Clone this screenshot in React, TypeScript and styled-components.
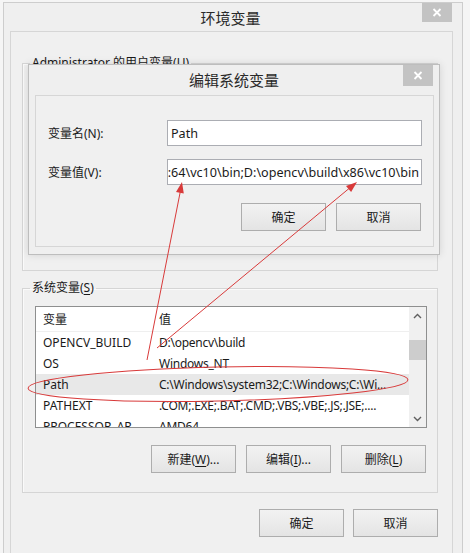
import React from 'react';
import styled, { createGlobalStyle } from 'styled-components';

const UI_FONT = `"Noto Sans", "Noto Sans CJK SC", sans-serif`;

const GlobalStyle = createGlobalStyle`
  html, body { margin: 0; padding: 0; }
  body {
    background: #f4f4f4;
    font-family: ${UI_FONT};
    font-size: 12px;
    color: #1a1a1a;
  }
`;

const Desktop = styled.div`
  position: relative;
  width: 470px;
  height: 553px;
  overflow: hidden;
  box-sizing: border-box;
  padding: 2px 0 0 3px;
  background: #f5f5f5;
`;

const Window = styled.div`
  width: 460px;
  height: 570px;
  box-sizing: border-box;
  border: 1px solid #cdcdcd;
  background: #efefef;
  display: flex;
  flex-direction: column;
`;

const TitleBar = styled.div<{ $height: number; $padLeft: number; $padRight: number }>`
  display: flex;
  flex-shrink: 0;
  height: ${p => p.$height}px;
  padding: 0 ${p => p.$padRight}px 0 ${p => p.$padLeft}px;
`;

const TitleSide = styled.div`
  flex: 1;
  display: flex;
  justify-content: flex-end;
  align-items: flex-start;
`;

const TitleText = styled.div`
  align-self: center;
  font-size: 15px;
  color: #2a2a2a;
  white-space: nowrap;
`;

const CloseButton = styled.div<{ $w: number; $h: number }>`
  width: ${p => p.$w}px;
  height: ${p => p.$h}px;
  background: #c3c3c3;
  display: flex;
  align-items: center;
  justify-content: center;
`;

const ClientArea = styled.div`
  flex: 1;
  margin: 0 9px 0 6px;
  border: 1px solid #d6d6d6;
  background: #f0f0f0;
  padding: 23px 14px 0 11px;
  display: flex;
  flex-direction: column;
`;

const GroupBox = styled.fieldset<{ $height: number; $top: number }>`
  margin: ${p => p.$top}px 0 0 0;
  min-width: 0;
  height: ${p => p.$height}px;
  box-sizing: border-box;
  border: 1px solid #d5d5d5;
  box-shadow: inset 1px 1px 0 #fafafa;
  padding: 10px 11px 0 12px;
  display: flex;
  flex-direction: column;
`;

const GroupLegend = styled.legend`
  margin-left: -5px;
  padding: 0 2px;
  line-height: 16px;
  font-size: 12px;
`;

const AccessKey = styled.u`
  text-underline-offset: 2px;
`;

const ButtonRow = styled.div<{ $top: number; $gap: number; $right?: number }>`
  display: flex;
  justify-content: flex-end;
  gap: ${p => p.$gap}px;
  margin-top: ${p => p.$top}px;
  margin-right: ${p => p.$right ?? 0}px;
`;

const PushButton = styled.div`
  width: 85px;
  height: 28px;
  box-sizing: border-box;
  border: 1px solid #adadad;
  background: linear-gradient(#f2f2f2, #e4e4e4);
  display: flex;
  align-items: center;
  justify-content: center;
  font-size: 12px;
  white-space: nowrap;
`;

const ListView = styled.div`
  width: 392px;
  height: 122px;
  box-sizing: border-box;
  border: 1px solid #8e8f8f;
  background: #fff;
  display: flex;
  overflow: hidden;
`;

const ListBody = styled.div`
  flex: 1;
  overflow: hidden;
`;

const ListRow = styled.div<{ $header?: boolean; $selected?: boolean }>`
  display: grid;
  grid-template-columns: 117px 1fr;
  align-items: center;
  height: ${p => (p.$header ? 24 : 21)}px;
  border-bottom: ${p => (p.$header ? '1px solid #efefef' : 'none')};
  background: ${p => (p.$selected ? '#e8e8e8' : 'transparent')};
  white-space: nowrap;
  font-size: 12px;
`;

const NameCell = styled.span`
  padding-left: 7px;
  overflow: hidden;
`;

const ValueCell = styled.span`
  padding-left: 6px;
  overflow: hidden;
  letter-spacing: -0.25px;
`;

const ScrollBar = styled.div`
  width: 17px;
  background: #f0f0f0;
  display: flex;
  flex-direction: column;
`;

const ScrollArrow = styled.div<{ $bottom?: boolean }>`
  height: 17px;
  display: flex;
  align-items: center;
  justify-content: center;
  margin-top: ${p => (p.$bottom ? 'auto' : '0')};
`;

const ScrollThumb = styled.div`
  height: 20px;
  margin-top: 16px;
  background: #cdcdcd;
`;

const Dialog = styled.div`
  position: absolute;
  left: 28px;
  top: 64px;
  width: 412px;
  height: 191px;
  box-sizing: border-box;
  border: 1px solid #bdbdbd;
  background: #efefef;
  box-shadow: 0 0 8px rgba(0, 0, 0, 0.12);
  display: flex;
  flex-direction: column;
`;

const DialogPanel = styled.div`
  margin: 1px 5px 0 6px;
  height: 152px;
  box-sizing: border-box;
  border: 1px solid #d6d6d6;
  background: #f0f0f0;
  padding: 24px 11px 0 12px;
  display: flex;
  flex-direction: column;
`;

const FormGrid = styled.div`
  display: grid;
  grid-template-columns: 119px 1fr;
  row-gap: 13px;
  align-items: center;
`;

const FieldLabel = styled.span`
  font-size: 12px;
  white-space: nowrap;
`;

const TextBox = styled.div<{ $h: number; $alignEnd?: boolean }>`
  height: ${p => p.$h}px;
  box-sizing: border-box;
  border: 1px solid #abadb3;
  background: #fff;
  display: flex;
  align-items: center;
  justify-content: ${p => (p.$alignEnd ? 'flex-end' : 'flex-start')};
  overflow: hidden;
  padding: 0 2px 0 3px;
  font-size: 12.6px;
  white-space: nowrap;
`;

const Annotations = styled.svg`
  position: absolute;
  left: 0;
  top: 0;
  pointer-events: none;
`;

const CrossIcon = () => (
  <svg width="10" height="9" viewBox="0 0 10 9">
    <path d="M1.5 1 L8.5 8 M8.5 1 L1.5 8" stroke="#fff" strokeWidth="1.8" />
  </svg>
);

const Chevron = ({ down }: { down?: boolean }) => (
  <svg width="9" height="6" viewBox="0 0 9 6">
    <polyline
      points={down ? '1,1 4.5,4.5 8,1' : '1,5 4.5,1.5 8,5'}
      fill="none"
      stroke="#5f5f5f"
      strokeWidth="1.4"
    />
  </svg>
);

const systemVars = [
  { name: 'OPENCV_BUILD', value: 'D:\\opencv\\build' },
  { name: 'OS', value: 'Windows_NT' },
  { name: 'Path', value: 'C:\\Windows\\system32;C:\\Windows;C:\\Wi...', selected: true },
  { name: 'PATHEXT', value: '.COM;.EXE;.BAT;.CMD;.VBS;.VBE;.JS;.JSE;....' },
  { name: 'PROCESSOR_AR...', value: 'AMD64' },
];

export default function App() {
  return (
    <>
      <GlobalStyle />
      <Desktop>
        <Window>
          <TitleBar $height={28} $padLeft={5} $padRight={10}>
            <TitleSide />
            <TitleText>环境变量</TitleText>
            <TitleSide>
              <CloseButton $w={30} $h={19}>
                <CrossIcon />
              </CloseButton>
            </TitleSide>
          </TitleBar>
          <ClientArea>
            <GroupBox $height={216} $top={0}>
              <GroupLegend>
                Administrator 的用户变量(<AccessKey>U</AccessKey>)
              </GroupLegend>
            </GroupBox>
            <GroupBox $height={213} $top={9}>
              <GroupLegend>
                系统变量(<AccessKey>S</AccessKey>)
              </GroupLegend>
              <ListView>
                <ListBody>
                  <ListRow $header>
                    <NameCell>变量</NameCell>
                    <ValueCell>值</ValueCell>
                  </ListRow>
                  {systemVars.map(v => (
                    <ListRow key={v.name} $selected={v.selected}>
                      <NameCell>{v.name}</NameCell>
                      <ValueCell>{v.value}</ValueCell>
                    </ListRow>
                  ))}
                </ListBody>
                <ScrollBar>
                  <ScrollArrow>
                    <Chevron />
                  </ScrollArrow>
                  <ScrollThumb />
                  <ScrollArrow $bottom>
                    <Chevron down />
                  </ScrollArrow>
                </ScrollBar>
              </ListView>
              <ButtonRow $top={17} $gap={10}>
                <PushButton>新建(<AccessKey>W</AccessKey>)...</PushButton>
                <PushButton>编辑(<AccessKey>I</AccessKey>)...</PushButton>
                <PushButton>删除(<AccessKey>L</AccessKey>)</PushButton>
              </ButtonRow>
            </GroupBox>
            <ButtonRow $top={16} $gap={9}>
              <PushButton>确定</PushButton>
              <PushButton>取消</PushButton>
            </ButtonRow>
          </ClientArea>
        </Window>

        <Dialog>
          <TitleBar $height={29} $padLeft={6} $padRight={6}>
            <TitleSide />
            <TitleText>编辑系统变量</TitleText>
            <TitleSide>
              <CloseButton $w={30} $h={21}>
                <CrossIcon />
              </CloseButton>
            </TitleSide>
          </TitleBar>
          <DialogPanel>
            <FormGrid>
              <FieldLabel>变量名(N):</FieldLabel>
              <TextBox $h={26}>Path</TextBox>
              <FieldLabel>变量值(V):</FieldLabel>
              <TextBox $h={26} $alignEnd>
                :64\vc10\bin;D:\opencv\build\x86\vc10\bin
              </TextBox>
            </FormGrid>
            <ButtonRow $top={18} $gap={10} $right={1}>
              <PushButton>确定</PushButton>
              <PushButton>取消</PushButton>
            </ButtonRow>
          </DialogPanel>
        </Dialog>

        <Annotations width="470" height="553" viewBox="0 0 470 553">
          <g stroke="#d83a3a" strokeWidth="1" fill="none">
            <line x1="147" y1="360" x2="181" y2="188" />
            <line x1="157" y1="348" x2="352" y2="186" />
            <ellipse cx="218" cy="384" rx="190" ry="17" transform="rotate(-1.3 218 384)" />
          </g>
          <g fill="#d83a3a">
            <polygon points="182,182 183.8,193.6 176,192" />
            <polygon points="357,182 351.1,192.1 346,185.9" />
          </g>
        </Annotations>
      </Desktop>
    </>
  );
}
